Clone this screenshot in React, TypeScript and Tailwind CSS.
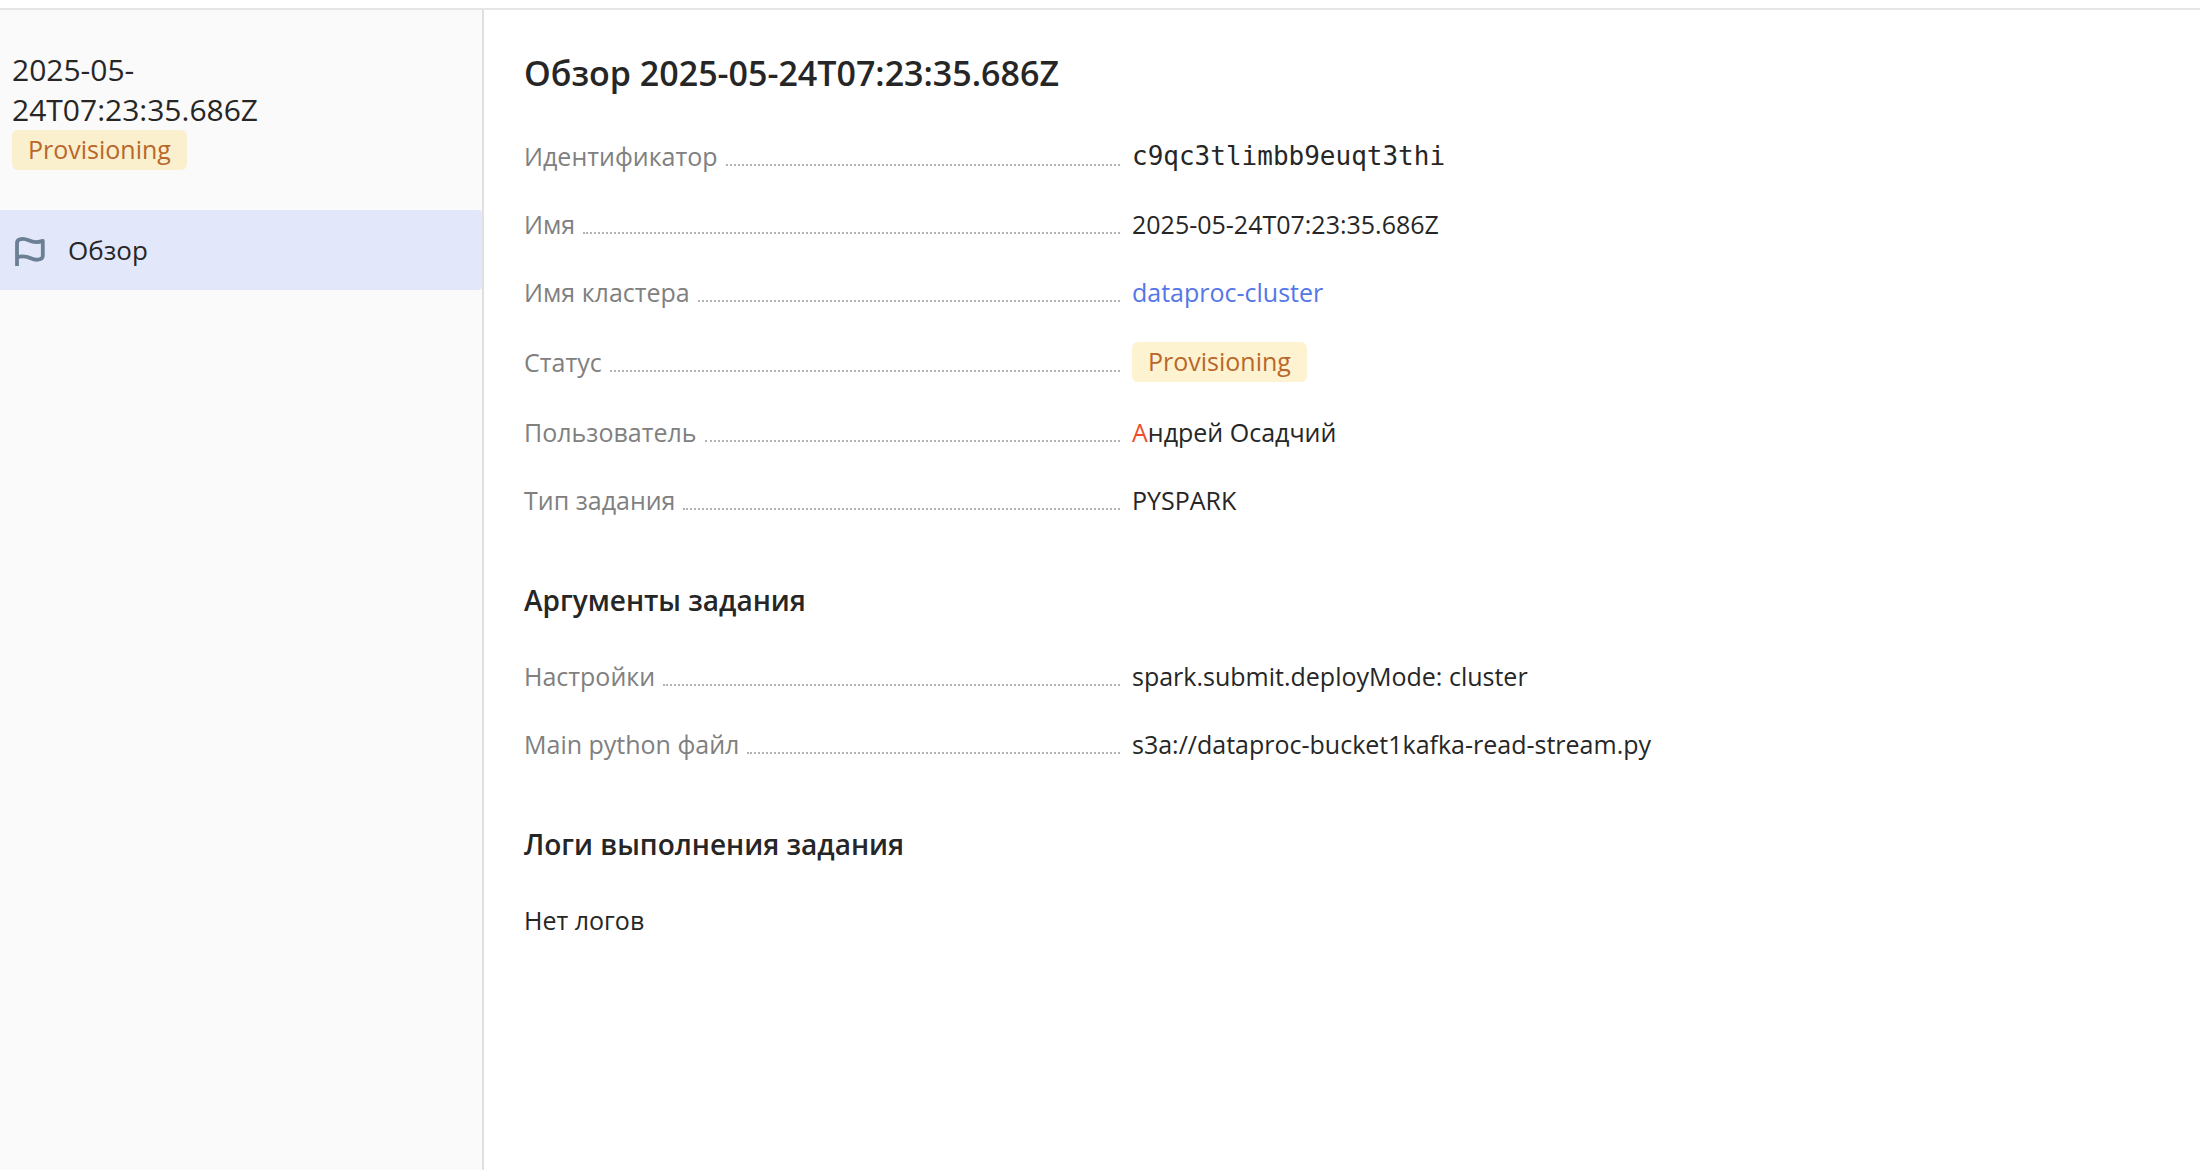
import type { ReactNode } from "react";

function FlagIcon() {
  return (
    <svg className="size-8 shrink-0" viewBox="0 0 32 32" fill="none" stroke="#6b8094" strokeWidth="3.8" strokeLinecap="round" strokeLinejoin="round" aria-hidden="true">
      <path d="M3 31.500V9.200c0-1.700.9-3.100 2.500-3.700 2.200-.8 5.500-.8 9 .8C19.500 8.500 23.500 8.900 28.800 6.900V21.500c0 1.600-.8 3-2.300 3.600-2.900 1.100-6.200.8-9.700-.9-4.500-2.200-8.500-2.500-13.800-1" />
    </svg>
  );
}

function Badge({ children, className }: { children: ReactNode; className: string }) {
  return <span className={`block h-10 w-fit rounded-md px-4 leading-[38px] text-[#b9672a] ${className}`}>{children}</span>;
}

function Row({ label, children }: { label: string; children: ReactNode }) {
  return (
    <div className="flex gap-3">
      <dt className="flex w-[596px] shrink-0 items-center gap-2 text-[#808080]">
        <span>{label}</span>
        <span className="mt-[18px] grow border-b-2 border-dotted border-[#b2b2b2]" />
      </dt>
      <dd>{children}</dd>
    </div>
  );
}

function SectionTitle({ children }: { children: ReactNode }) {
  return <h2 className="mt-[62px] mb-[38px] text-[28px] leading-10 font-semibold">{children}</h2>;
}

export default function App() {
  return (
    <div className="flex min-h-screen flex-col bg-white pt-2 font-['Open_Sans',sans-serif] text-[25px] leading-9 text-[#262626]">
      <div className="flex grow border-t-2 border-[#e5e5e5]">
        <aside className="w-[484px] shrink-0 border-r-2 border-[#e0e0e0] bg-[#fafafa] pt-10">
          <div className="px-3">
            <div className="w-64 text-[30px] leading-10">2025-05-<wbr />24T07:23:35.686Z</div>
            <Badge className="bg-[#faf0cd]">Provisioning</Badge>
          </div>
          <nav className="mt-10">
            <a href="#overview" className="flex h-20 items-center gap-[22px] rounded-r-sm bg-[#e2e7fa] pl-3.5 text-[26px]" aria-current="page">
              <FlagIcon />
              Обзор
            </a>
          </nav>
        </aside>
        <main id="overview" className="min-w-0 grow px-10 pt-[39px] pb-10">
          <h1 className="mb-10 text-[34px] leading-[48px] font-semibold">Обзор 2025-05-24T07:23:35.686Z</h1>
          <dl className="flex flex-col gap-8">
            <Row label="Идентификатор">
              <span className="font-['DejaVu_Sans_Mono',monospace] text-[26px]">c9qc3tlimbb9euqt3thi</span>
            </Row>
            <Row label="Имя">2025-05-24T07:23:35.686Z</Row>
            <Row label="Имя кластера">
              <a href="#cluster" className="text-[#5577e6]">dataproc-cluster</a>
            </Row>
            <Row label="Статус">
              <Badge className="bg-[#fdf3d1]">Provisioning</Badge>
            </Row>
            <Row label="Пользователь">
              <span className="text-[#f04b2d]">А</span>ндрей Осадчий
            </Row>
            <Row label="Тип задания">PYSPARK</Row>
          </dl>
          <SectionTitle>Аргументы задания</SectionTitle>
          <dl className="flex flex-col gap-8">
            <Row label="Настройки">spark.submit.deployMode: cluster</Row>
            <Row label="Main python файл">s3a://dataproc-bucket1kafka-read-stream.py</Row>
          </dl>
          <SectionTitle>Логи выполнения задания</SectionTitle>
          <p>Нет логов</p>
        </main>
      </div>
    </div>
  );
}
